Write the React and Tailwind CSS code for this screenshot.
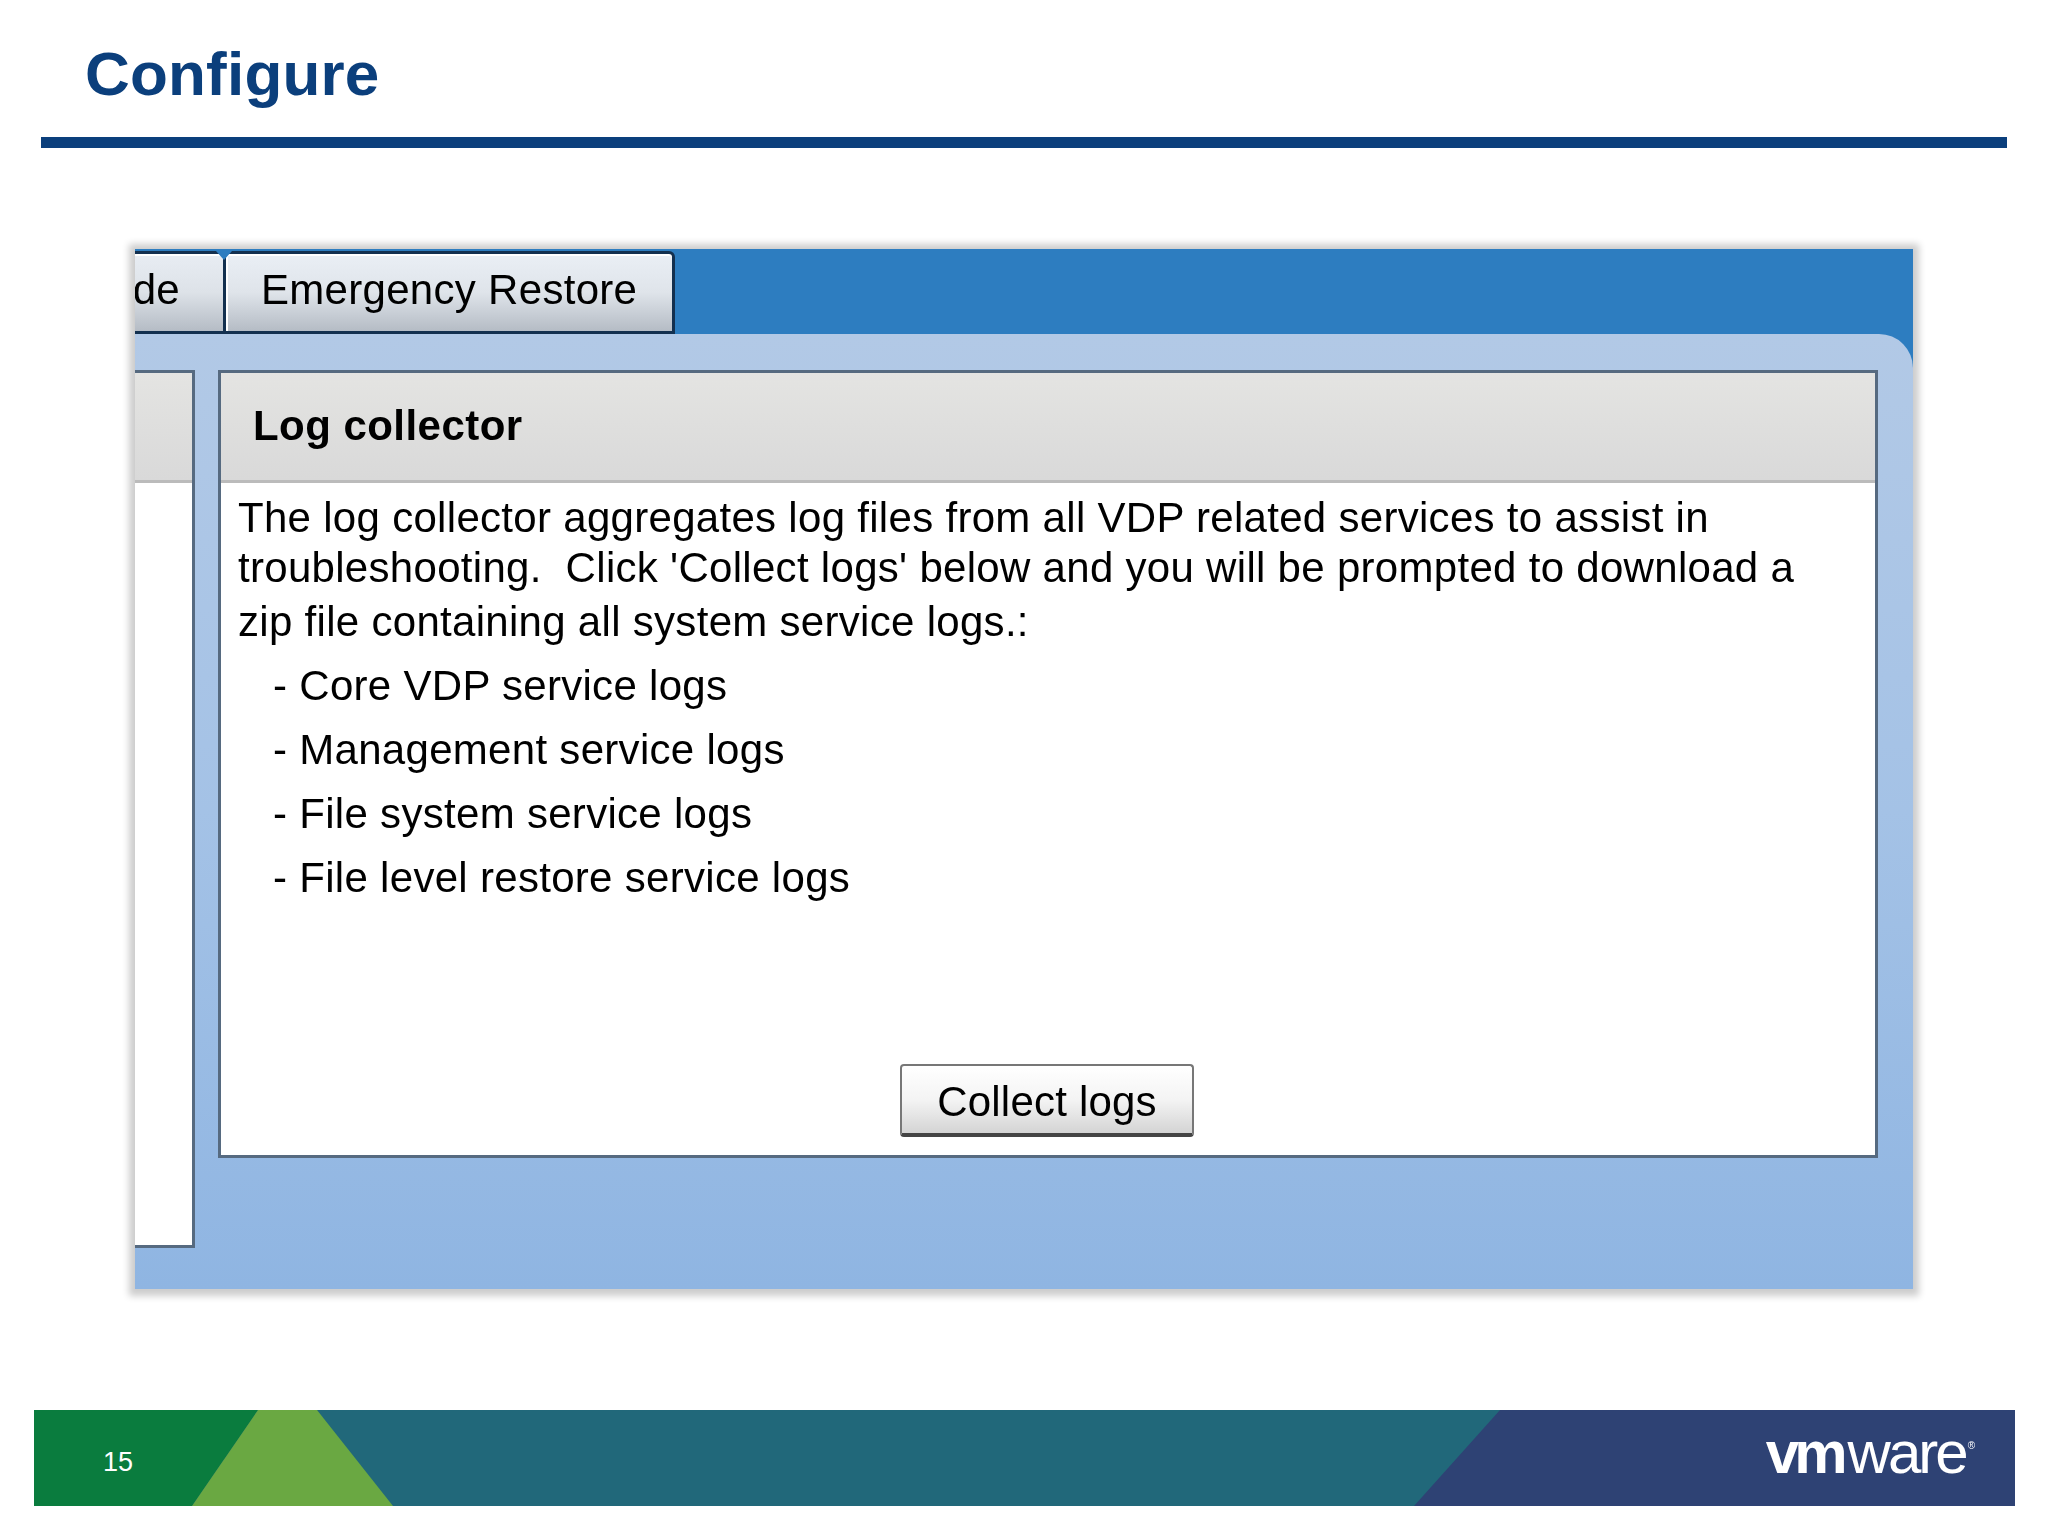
export default function App() {
  const sans = "font-['Liberation_Sans',Arial,sans-serif]";
  return (
    <div className={`w-[2048px] h-[1536px] bg-white flex flex-col relative overflow-hidden ${sans}`}>
      <h1 className="ml-[85px] mt-[35px] h-[77px] text-[62px] leading-[77px] font-bold text-[#0b3f7c] tracking-[0.2px]">Configure</h1>
      <div className="ml-[41px] mt-[25px] w-[1966px] h-[11px] bg-[#0b3f7c]" />

      <div className="ml-[135px] mt-[101px] w-[1778px] h-[1040px] bg-[#2d7dc0] flex flex-col shadow-[0_1px_7px_6px_#cdcdcd] overflow-hidden">
        <div className="h-[85px] flex pt-[2px] shrink-0 blur-[0.4px]">
          <div className="relative w-[91px] h-[83px] bg-gradient-to-b from-[#e8edf3] via-[#dde2e8] to-[#b5bcc5] border-t-[3px] border-b-[3px] border-r-[3px] border-[#13304f] shadow-[inset_0_2px_0_#fff]">
            <span className="absolute right-[43px] top-[13px] text-[42px] leading-[46px] text-black tracking-[0.3px]">de</span>
            <span className="absolute right-[-9px] top-[-3px] w-0 h-0 border-l-[8px] border-r-[8px] border-t-[9px] border-l-transparent border-r-transparent border-t-[#2d7dc0]" />
          </div>
          <div className="w-[449px] h-[83px] bg-gradient-to-b from-[#eaeff5] via-[#dfe4ea] to-[#b5bcc5] border-t-[3px] border-b-[3px] border-r-[3px] border-[#13304f] rounded-tr-[6px] shadow-[inset_0_2px_0_#fff,inset_2px_0_0_#fff] pl-[35px] pt-[13px] text-[42px] leading-[46px] text-black tracking-[0.3px] whitespace-nowrap">
            Emergency Restore
          </div>
        </div>

        <div className="flex-1 rounded-tr-[34px] bg-gradient-to-b from-[#b2c9e6] via-[#a4c2e6] to-[#8fb5e2] pt-[36px] flex items-start gap-[23px]">
          <div className="w-[60px] h-[878px] shrink-0 border-t-[3px] border-r-[3px] border-b-[3px] border-[#566a80] bg-white">
            <div className="h-[110px] bg-gradient-to-b from-[#e4e4e2] to-[#d9d9d9] border-b-[3px] border-[#bbbbbb]" />
          </div>

          <div className="w-[1660px] h-[788px] shrink-0 border-[3px] border-[#566a80] bg-white flex flex-col text-black blur-[0.4px]">
            <div className="h-[110px] shrink-0 bg-gradient-to-b from-[#e4e4e2] to-[#d9d9d9] border-b-[3px] border-[#bbbbbb] pl-[32px] pb-[2px] flex items-center">
              <span className="text-[42px] font-bold tracking-[0.45px]">Log collector</span>
            </div>
            <div className="flex-1 flex flex-col text-[42px] tracking-[0.3px] whitespace-nowrap pl-[17px]">
              <div className="mt-[10px] leading-[50px]">The log collector aggregates log files from all VDP related services to assist in</div>
              <div className="leading-[50px]">troubleshooting.&nbsp; Click 'Collect logs' below and you will be prompted to download a</div>
              <div className="mt-[4px] leading-[50px]">zip file containing all system service logs.:</div>
              <div className="mt-[14px] pl-[35px] flex flex-col gap-[14px] leading-[50px]">
                <div>- Core VDP service logs</div>
                <div>- Management service logs</div>
                <div>- File system service logs</div>
                <div>- File level restore service logs</div>
              </div>
              <div className="flex-1" />
              <div className="flex justify-center pr-[19px] mb-[18px]">
                <div className="w-[294px] h-[73px] pt-[3px] rounded-[4px] border-[2px] border-[#777] border-b-[4px] border-b-[#444] bg-gradient-to-b from-[#ffffff] via-[#f4f4f4] to-[#d4d4d4] flex items-center justify-center text-[42px] tracking-[0.2px]">
                  Collect logs
                </div>
              </div>
            </div>
          </div>
        </div>
      </div>

      <div className="ml-[34px] mt-[121px] w-[1981px] h-[96px] relative flex items-center justify-between bg-[#21687a]">
        <svg className="absolute inset-0" width="1981" height="96" viewBox="0 0 1981 96">
          <polygon points="0,0 224,0 158,96 0,96" fill="#0a7c3e" />
          <polygon points="224,0 283,0 359,96 158,96" fill="#6aa842" />
          <polygon points="1466,0 1981,0 1981,96 1380,96" fill="#2e4274" />
        </svg>
        <span className="relative ml-[69px] mt-[9px] text-[27px] text-white leading-none">15</span>
        <span className="relative mr-[40px] text-white text-[60px] leading-none flex items-start mt-[-11px] blur-[0.4px]">
          <span className="font-bold tracking-[-5px]">vm</span>
          <span className="ml-[5px] tracking-[-3px]">ware</span>
          <span className="text-[10px] mt-[18px] ml-[2px]">®</span>
        </span>
      </div>
    </div>
  );
}
